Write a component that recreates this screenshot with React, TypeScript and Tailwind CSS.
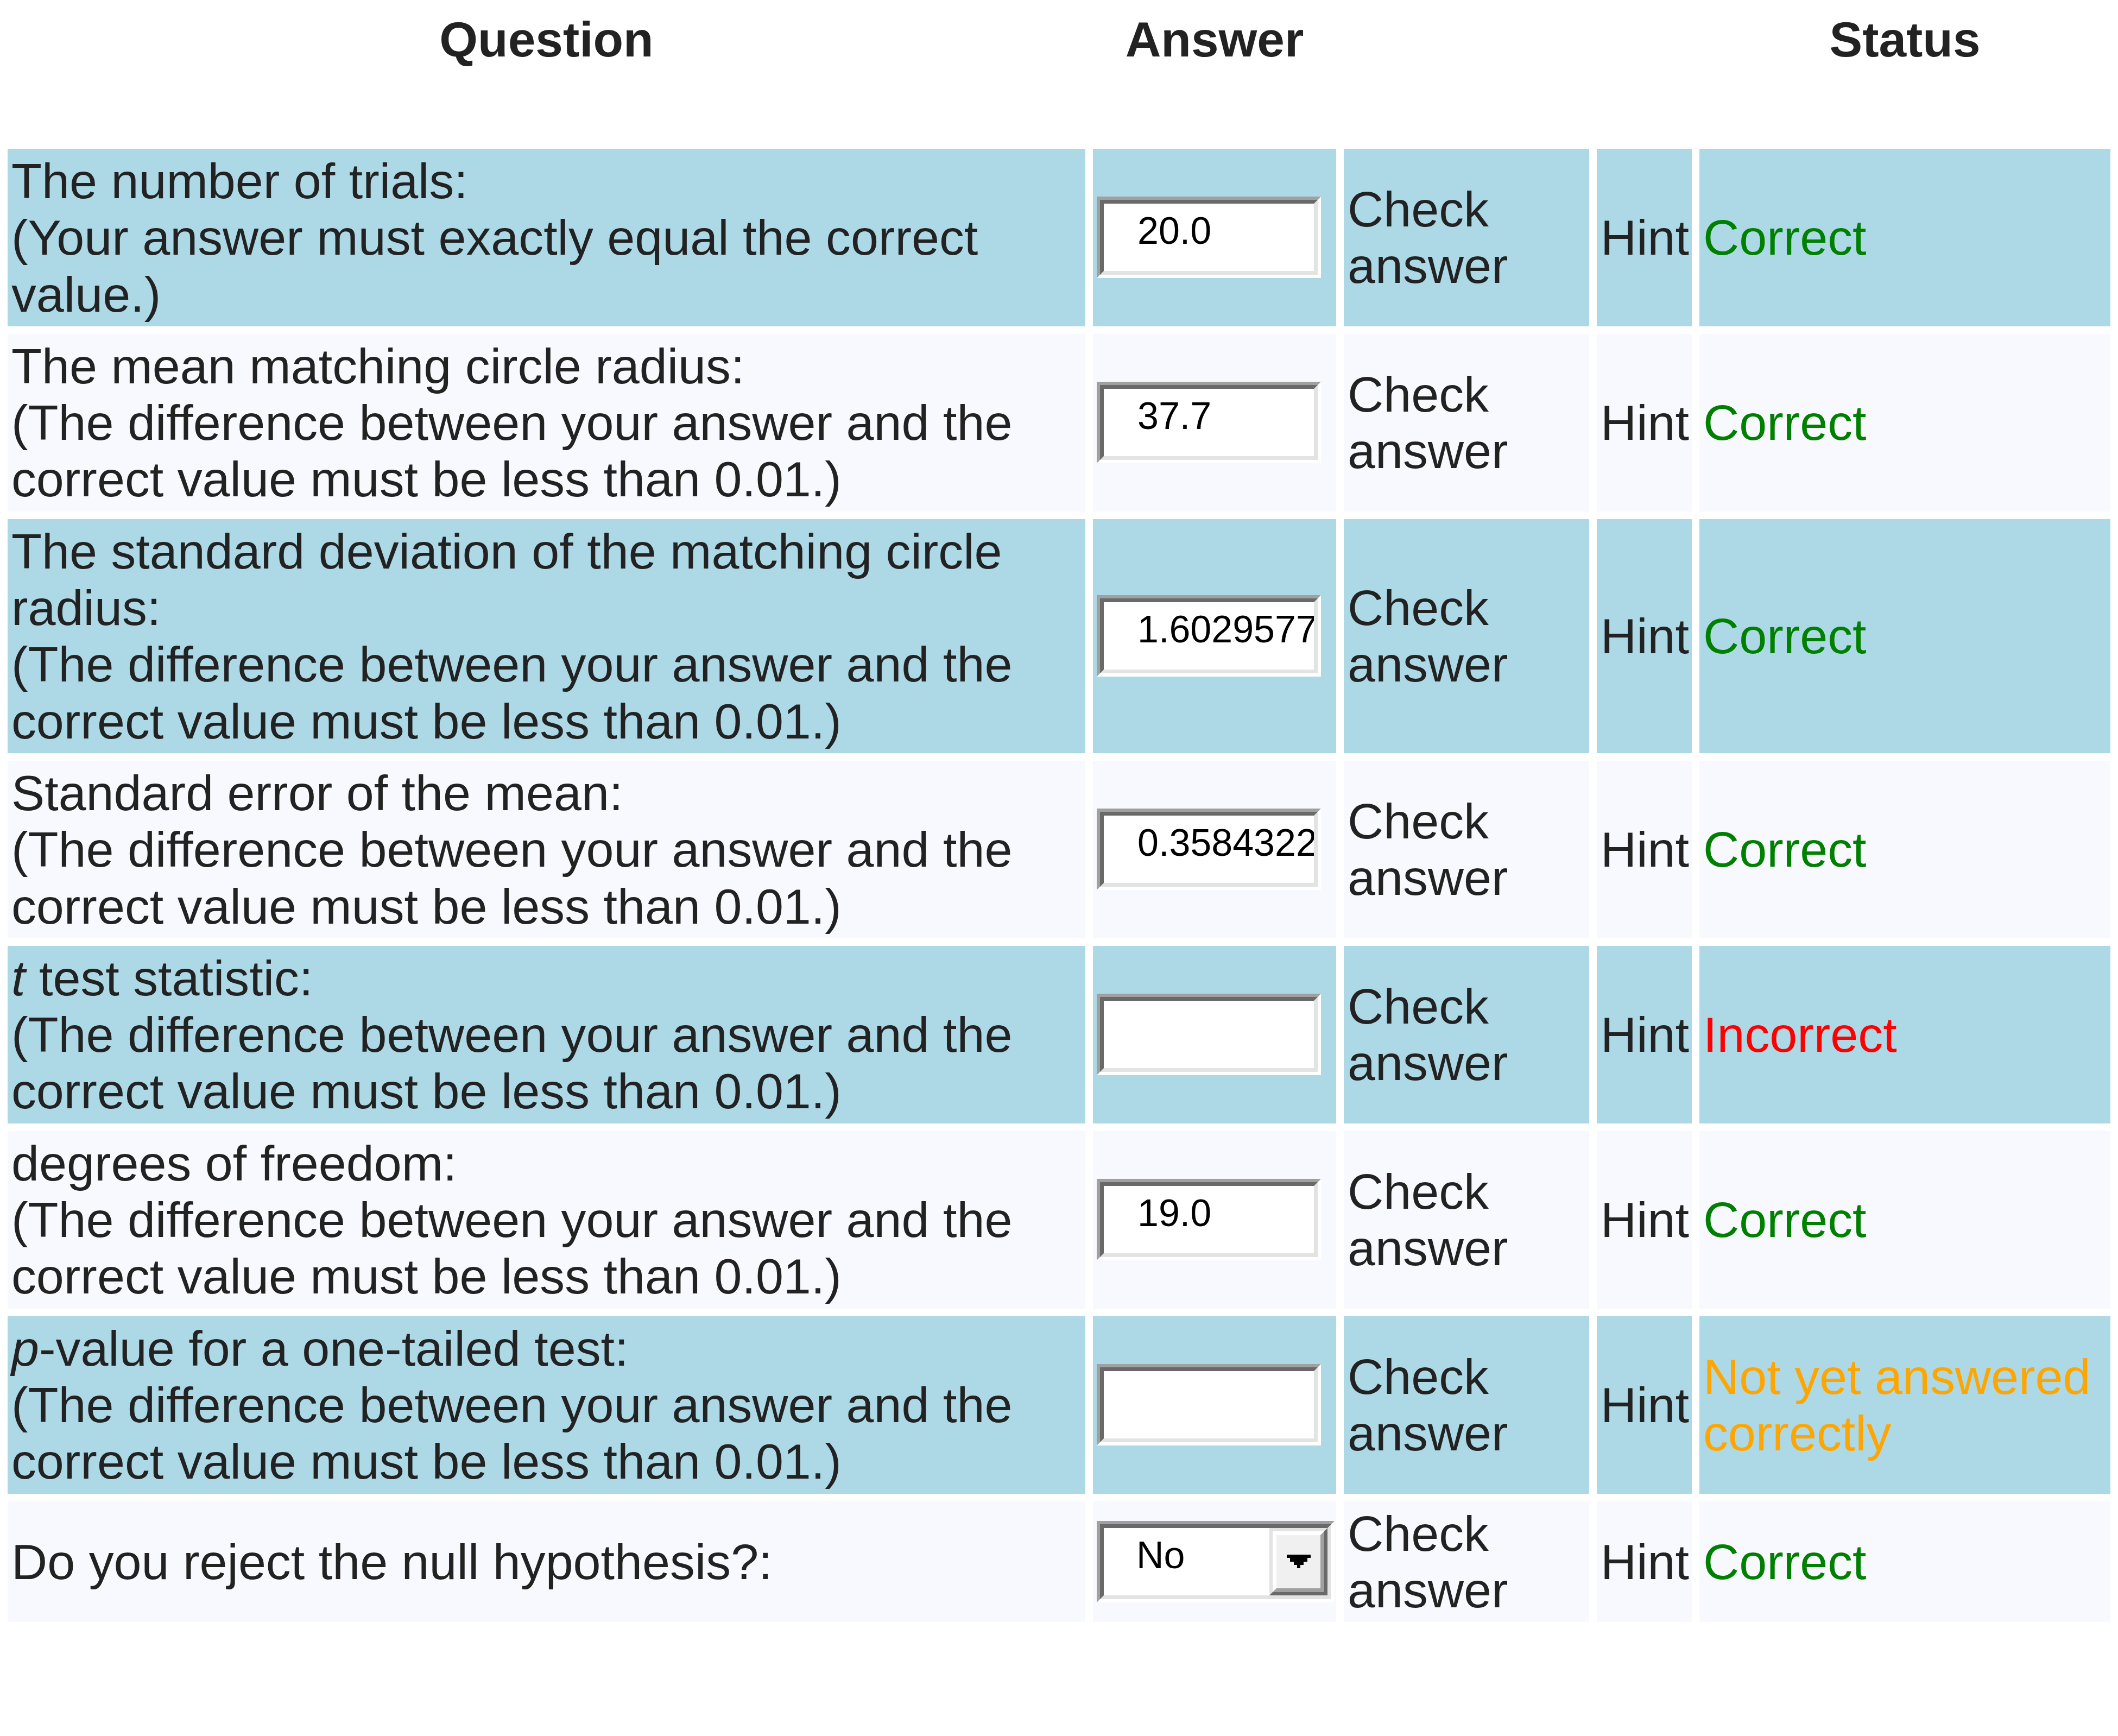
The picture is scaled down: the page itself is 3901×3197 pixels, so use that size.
import React from 'react';

type Status = 'correct' | 'incorrect' | 'pending';

const rows: { q: React.ReactNode; kind: 'text' | 'select'; value: string; status: Status }[] = [
  {
    q: (
      <>
        The number of trials:
        <br />
        (Your answer must exactly equal the correct value.)
      </>
    ),
    kind: 'text',
    value: '20.0',
    status: 'correct',
  },
  {
    q: (
      <>
        The mean matching circle radius:
        <br />
        (The difference between your answer and the correct value must be less than 0.01.)
      </>
    ),
    kind: 'text',
    value: '37.7',
    status: 'correct',
  },
  {
    q: (
      <>
        The standard deviation of the matching circle radius:
        <br />
        (The difference between your answer and the correct value must be less than 0.01.)
      </>
    ),
    kind: 'text',
    value: '1.6029577957',
    status: 'correct',
  },
  {
    q: (
      <>
        Standard error of the mean:
        <br />
        (The difference between your answer and the correct value must be less than 0.01.)
      </>
    ),
    kind: 'text',
    value: '0.3584322384',
    status: 'correct',
  },
  {
    q: (
      <>
        <i>t</i> test statistic:
        <br />
        (The difference between your answer and the correct value must be less than 0.01.)
      </>
    ),
    kind: 'text',
    value: '',
    status: 'incorrect',
  },
  {
    q: (
      <>
        degrees of freedom:
        <br />
        (The difference between your answer and the correct value must be less than 0.01.)
      </>
    ),
    kind: 'text',
    value: '19.0',
    status: 'correct',
  },
  {
    q: (
      <>
        <i>p</i>-value for a one-tailed test:
        <br />
        (The difference between your answer and the correct value must be less than 0.01.)
      </>
    ),
    kind: 'text',
    value: '',
    status: 'pending',
  },
  {
    q: <>Do you reject the null hypothesis?:</>,
    kind: 'select',
    value: 'No',
    status: 'correct',
  },
];

const Field = ({ value }: { value: string }) => (
  <div className="w-[413px] h-[150px] border-[6px] border-t-[#a0a0a0] border-l-[#a0a0a0] border-r-white border-b-white">
    <div className="h-full border-[7px] border-t-[#696969] border-l-[#696969] border-r-[#e3e3e3] border-b-[#e3e3e3] bg-white overflow-hidden whitespace-nowrap pl-[62px] pt-[10px] text-[70px] leading-[80px] text-black">
      {value}
    </div>
  </div>
);

const Dropdown = ({ value }: { value: string }) => (
  <div className="w-[438px] h-[150px] border-[6px] border-t-[#a0a0a0] border-l-[#a0a0a0] border-r-white border-b-white">
    <div className="h-full flex border-[7px] border-t-[#696969] border-l-[#696969] border-r-[#e3e3e3] border-b-[#e3e3e3] bg-white">
      <div className="flex-1 pl-[60px] pt-[10px] text-[70px] leading-[80px] text-black whitespace-nowrap">{value}</div>
      <div className="w-[107px] h-full border-[6px] border-t-[#e3e3e3] border-l-[#e3e3e3] border-r-[#696969] border-b-[#696969]">
        <div className="h-full border-[7px] border-t-white border-l-white border-r-[#a0a0a0] border-b-[#a0a0a0] bg-[#f0f0f0] flex items-center justify-center">
          <svg width="44" height="25" viewBox="0 0 7 4" shapeRendering="crispEdges" className="block">
            <rect x="0" y="0" width="7" height="1" fill="#000" />
            <rect x="1" y="1" width="5" height="1" fill="#000" />
            <rect x="2" y="2" width="3" height="1" fill="#000" />
            <rect x="3" y="3" width="1" height="1" fill="#000" />
          </svg>
        </div>
      </div>
    </div>
  </div>
);

const statusText: Record<Status, { label: string; cls: string }> = {
  correct: { label: 'Correct', cls: 'text-[#008000]' },
  incorrect: { label: 'Incorrect', cls: 'text-[#ff0000]' },
  pending: { label: 'Not yet answered correctly', cls: 'text-[#ffa500]' },
};

export default function App() {
  return (
    <div className="min-h-screen bg-white font-['Liberation_Sans',Arial,sans-serif] text-[91.7px] leading-[104.3px] text-[#222]">
      <table className="w-[3901px] table-fixed border-separate border-spacing-[14px]">
        <thead>
          <tr>
            <th className="w-[1985px] h-[246px] p-[7px] align-top text-center font-bold text-[91px]">Question</th>
            <th className="w-[448px] h-[246px] p-[7px] align-top text-center font-bold text-[91px]">Answer</th>
            <th className="w-[452px] h-[246px] p-[7px] align-top"></th>
            <th className="w-[175px] h-[246px] p-[7px] align-top"></th>
            <th className="w-[757px] h-[246px] p-[7px] align-top text-center font-bold text-[91px]">Status</th>
          </tr>
        </thead>
        <tbody>
          {rows.map((r, i) => {
            const bg = i % 2 === 0 ? 'bg-[#add8e6]' : 'bg-[#f8f8ff]';
            const st = statusText[r.status];
            return (
              <tr key={i}>
                <td className={`${bg} p-[7px] align-middle`}>{r.q}</td>
                <td className={`${bg} p-[7px] align-middle`}>
                  {r.kind === 'text' ? <Field value={r.value} /> : <Dropdown value={r.value} />}
                </td>
                <td className={`${bg} p-[7px] align-middle`}>Check answer</td>
                <td className={`${bg} p-[7px] align-middle`}>Hint</td>
                <td className={`${bg} p-[7px] align-middle ${st.cls}`}>{st.label}</td>
              </tr>
            );
          })}
        </tbody>
      </table>
    </div>
  );
}
